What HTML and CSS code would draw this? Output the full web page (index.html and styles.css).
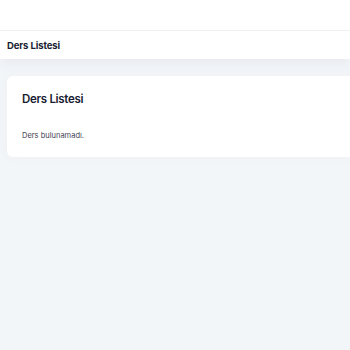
FILE: index.html
```html
<!DOCTYPE html>
<html lang="tr">
<head>
    <meta charset="UTF-8">
    <meta name="viewport" content="width=device-width, initial-scale=1.0">
    <title>Ders Listesi</title>
    <link rel="stylesheet" href="styles.css">
</head>
<body>
    <header class="topbar"></header>
    <div class="page-title">
        <h1>Ders Listesi</h1>
    </div>
    <main class="content">
        <div class="card">
            <h2 class="card-title">Ders Listesi</h2>
            <p class="empty">Ders bulunamadı.</p>
        </div>
    </main>
</body>
</html>
```
FILE: styles.css
```css
body {
    margin: 0;
    min-height: 100vh;
    background-color: #f3f6f9;
    font-family: Inter, "Open Sans", sans-serif;
    color: #181c32;
    overflow: hidden;
}
.topbar {
    height: 30px;
    background-color: #fff;
    border-bottom: 1px solid #eef0f3;
}
.page-title {
    height: 28px;
    display: flex;
    align-items: center;
    padding: 0 7px;
    background-color: #fff;
    box-shadow: 0 6px 10px rgba(82, 63, 105, 0.06);
}
.page-title h1 {
    margin: 0;
    font-size: 9.5px;
    font-weight: 700;
    letter-spacing: -0.1px;
    line-height: 12px;
    padding-top: 1px;
}
.content {
    padding: 17px 0 0 7px;
}
.card {
    background-color: #fff;
    border-radius: 6px 0 0 6px;
    padding: 16px 15px 16px 15px;
    margin-right: -10px;
    box-shadow: 0 0 12px rgba(82, 63, 105, 0.03);
}
.card-title {
    margin: 0;
    font-size: 11.5px;
    font-weight: 600;
    letter-spacing: -0.3px;
    line-height: 15px;
}
.empty {
    margin: 24px 0 0;
    font-size: 7.5px;
    color: #3f4254;
    line-height: 10px;
}
```
